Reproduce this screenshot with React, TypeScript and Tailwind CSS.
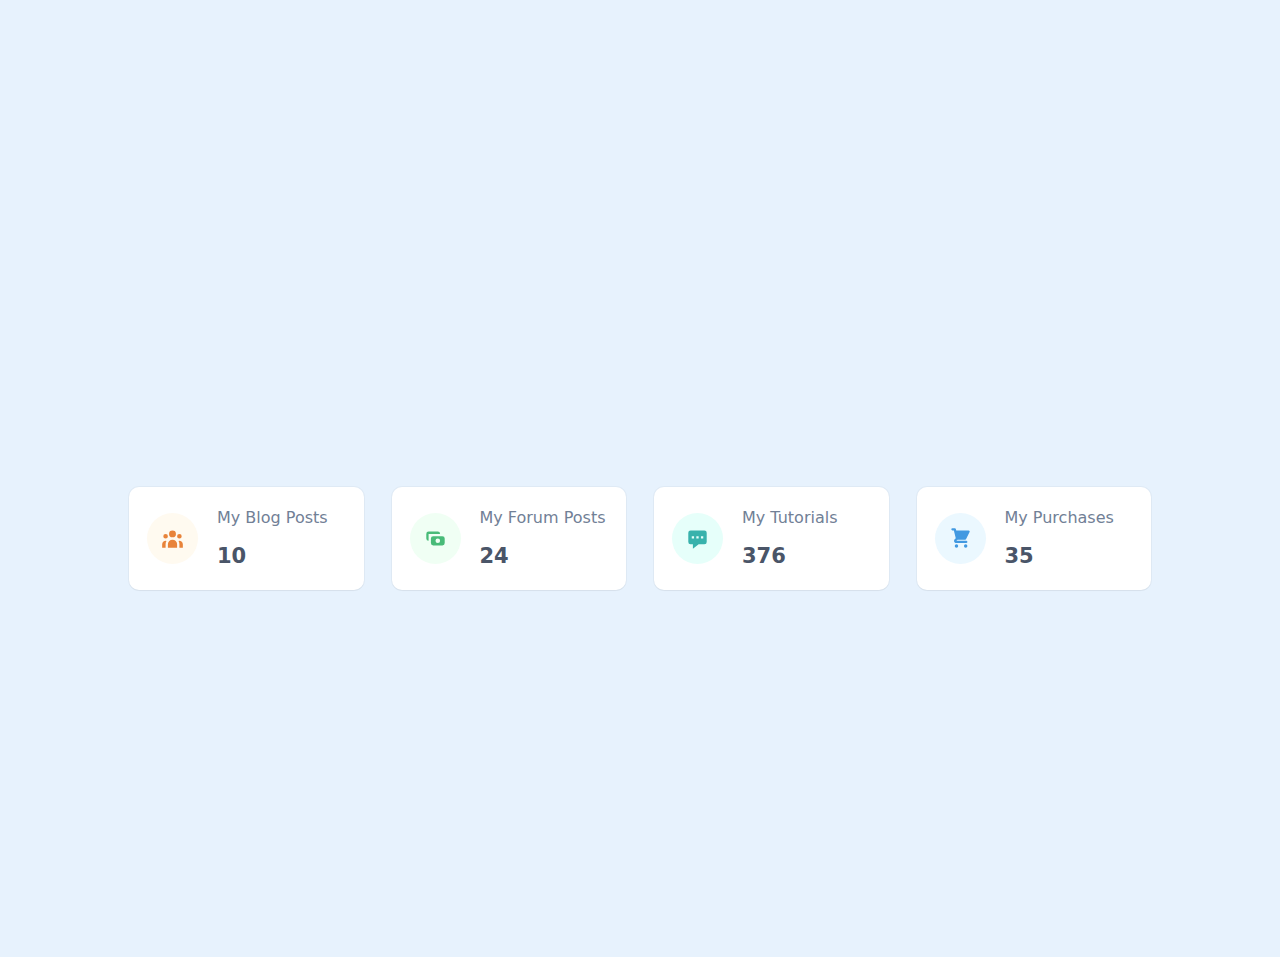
type Stat = {
    title: string;
    value: number;
    color: string;
    icon: string;
};

const stats: Stat[] = [
    {
        title: 'My Blog Posts',
        value: 10,
        color: 'text-[#e8833a] bg-[#fffaf0]',
        icon: 'M13 6a3 3 0 11-6 0 3 3 0 016 0zM18 8a2 2 0 11-4 0 2 2 0 014 0zM14 15a4 4 0 00-8 0v3h8v-3zM6 8a2 2 0 11-4 0 2 2 0 014 0zM16 18v-3a5.972 5.972 0 00-.75-2.906A3.005 3.005 0 0119 15v3h-3zM4.75 12.094A5.973 5.973 0 004 15v3H1v-3a3 3 0 013.75-2.906z',
    },
    {
        title: 'My Forum Posts',
        value: 24,
        color: 'text-[#48bb78] bg-[#f0fff4]',
        icon: 'M4 4a2 2 0 00-2 2v4a2 2 0 002 2V6h10a2 2 0 00-2-2H4zm2 6a2 2 0 012-2h8a2 2 0 012 2v4a2 2 0 01-2 2H8a2 2 0 01-2-2v-4zm6 4a2 2 0 100-4 2 2 0 000 4z',
    },
    {
        title: 'My Tutorials',
        value: 376,
        color: 'text-[#38b2ac] bg-[#e6fffa]',
        icon: 'M18 5v8a2 2 0 01-2 2h-5l-5 4v-4H4a2 2 0 01-2-2V5a2 2 0 012-2h12a2 2 0 012 2zM7 8H5v2h2V8zm2 0h2v2H9V8zm6 0h-2v2h2V8z',
    },
    {
        title: 'My Purchases',
        value: 35,
        color: 'text-[#4299e1] bg-[#ebf8ff]',
        icon: 'M3 1a1 1 0 000 2h1.22l.305 1.222a.997.997 0 00.01.042l1.358 5.43-.893.892C3.74 11.846 4.632 14 6.414 14H15a1 1 0 000-2H6.414l1-1H14a1 1 0 00.894-.553l3-6A1 1 0 0017 3H6.28l-.31-1.243A1 1 0 005 1H3zM16 16.5a1.5 1.5 0 11-3 0 1.5 1.5 0 013 0zM6.5 18a1.5 1.5 0 100-3 1.5 1.5 0 000 3z',
    },
];

function StatCard({stat}: {stat: Stat}) {
    return (
        <div className="flex items-center p-[18px] bg-white rounded-[10px] shadow-[0_0_0_1px_rgba(0,0,0,0.03),0_1px_1px_rgba(0,0,0,0.04)]">
            <div className={`shrink-0 p-3.5 mr-[19px] rounded-full ${stat.color}`}>
                <svg className="w-[23px] h-[23px]" fill="currentColor" viewBox="0 0 20 20" aria-hidden="true">
                    <path d={stat.icon} fillRule="evenodd" clipRule="evenodd"/>
                </svg>
            </div>
            <div>
                <p className="mb-[9px] text-base leading-[26px] whitespace-nowrap text-[#718096]">{stat.title}</p>
                <p className="text-[21px] leading-8 font-bold text-[#4a5568]">{stat.value}</p>
            </div>
        </div>
    );
}

export default function App() {
    return (
        <main className="flex items-center min-h-screen pt-30 bg-[#e7f2fd] font-['DejaVu_Sans',sans-serif]">
            <div className="grid w-4/5 px-px mx-auto gap-7 sm:grid-cols-2 lg:grid-cols-4">
                {stats.map(stat => <StatCard key={stat.title} stat={stat}/>)}
            </div>
        </main>
    );
}
